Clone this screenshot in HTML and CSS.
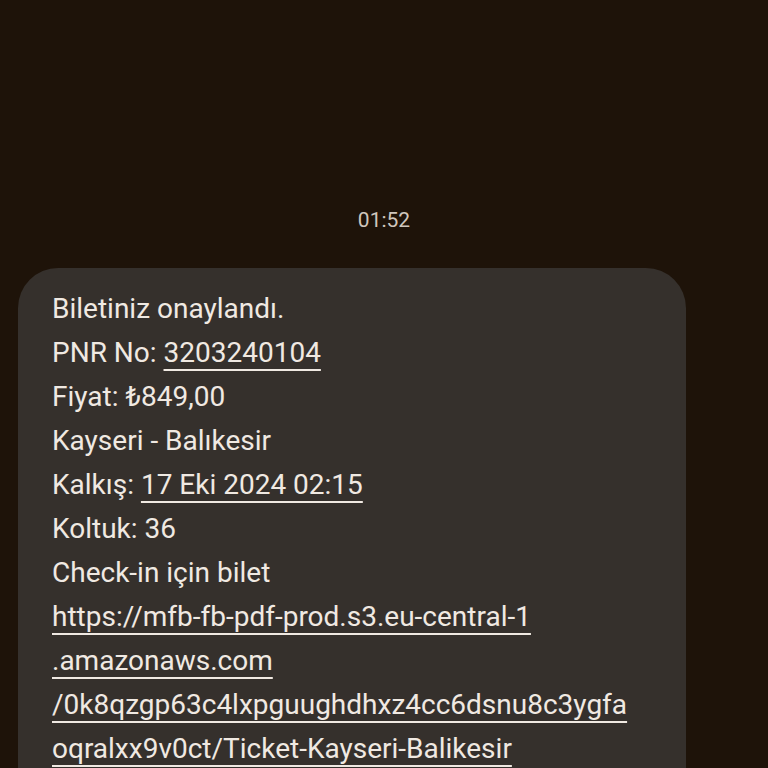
FILE: index.html
```html
<!DOCTYPE html>
<html lang="tr">
<head>
    <meta charset="UTF-8">
    <title>Mesaj</title>
    <link rel="stylesheet" href="styles.css">
</head>
<body>
    <div class="thread">
        <div class="timestamp">01:52</div>
        <div class="bubble">
            <div class="line">Biletiniz onaylandı.</div>
            <div class="line">PNR No: <span class="link">3203240104</span></div>
            <div class="line">Fiyat: ₺849,00</div>
            <div class="line">Kayseri - Balıkesir</div>
            <div class="line">Kalkış: <span class="link">17 Eki 2024 02:15</span></div>
            <div class="line">Koltuk: 36</div>
            <div class="line">Check-in için bilet</div>
            <div class="line"><span class="link">https://mfb-fb-pdf-prod.s3.eu-central-1</span></div>
            <div class="line"><span class="link">.amazonaws.com</span></div>
            <div class="line"><span class="link">/0k8qzgp63c4lxpguughdhxz4cc6dsnu8c3ygfa</span></div>
            <div class="line"><span class="link">oqralxx9v0ct/Ticket-Kayseri-Balikesir</span></div>
        </div>
    </div>
</body>
</html>
```

FILE: styles.css
```css
body {
    margin: 0;
    background-color: #1e1309;
    font-family: Roboto, "Noto Sans", sans-serif;
    height: 768px;
    overflow: hidden;
}

.thread {
    padding-top: 204px;
}

.timestamp {
    text-align: center;
    color: #cfc6bd;
    font-size: 21px;
    line-height: 32px;
    margin-bottom: 32px;
}

.bubble {
    margin-left: 18px;
    width: 668px;
    box-sizing: border-box;
    background-color: #35302c;
    border-radius: 40px;
    padding: 19px 20px 40px 34px;
    color: #f0e9e2;
    font-size: 28px;
    line-height: 44px;
}

.link {
    text-decoration: underline;
    text-decoration-thickness: 2px;
    text-underline-offset: 7px;
}
```
